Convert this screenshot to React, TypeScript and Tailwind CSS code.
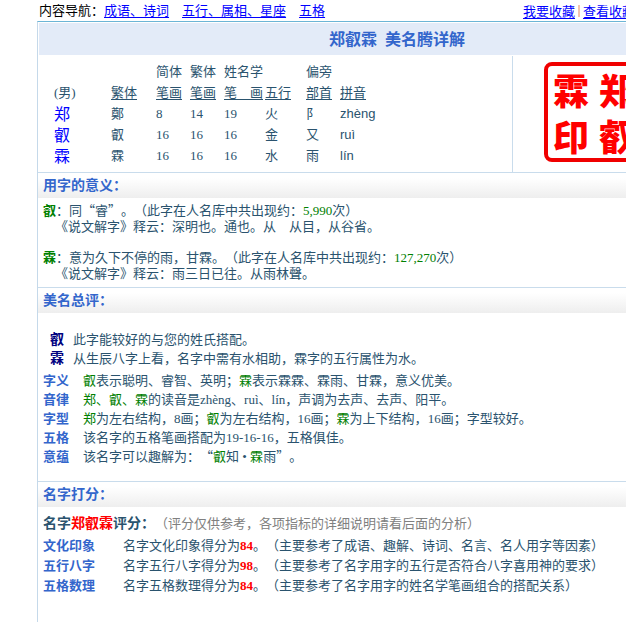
import type { ReactNode } from "react";

const characters = [
  { simple: "郑", traditional: "鄭", strokes: [8, 14, 19], element: "火", radical: "阝", pinyin: "zhèng" },
  { simple: "叡", traditional: "叡", strokes: [16, 16, 16], element: "金", radical: "又", pinyin: "ruì" },
  { simple: "霖", traditional: "霖", strokes: [16, 16, 16], element: "水", radical: "雨", pinyin: "lín" },
];

const scores = [
  { label: "文化印象", score: 84, note: "主要参考了成语、趣解、诗词、名言、名人用字等因素" },
  { label: "五行八字", score: 98, note: "主要参考了名字用字的五行是否符合八字喜用神的要求" },
  { label: "五格数理", score: 84, note: "主要参考了名字用字的姓名学笔画组合的搭配关系" },
];

function Latin({ children }: { children: ReactNode }) {
  return <span className="font-['Liberation_Serif',serif] leading-none">{children}</span>;
}

function Green({ children }: { children: ReactNode }) {
  return <span className="text-[#008000]">{children}</span>;
}

function NavLink({ children }: { children: ReactNode }) {
  return (
    <a href="#" className="text-[#0000ff] underline underline-offset-2">
      {children}
    </a>
  );
}

function SectionTitle({ children }: { children: ReactNode }) {
  return (
    <h2 className="h-[26px] border-t border-[#c9dcec] bg-linear-to-b from-white from-20% to-[#eeeeee] pl-[5px] text-[14px] leading-[23px] font-bold text-[#3366cc]">
      {children}
    </h2>
  );
}

function Comment({ label, children }: { label: string; children: ReactNode }) {
  return (
    <div className="flex">
      <dt className="w-10 font-bold text-[#3366cc]">{label}</dt>
      <dd>{children}</dd>
    </div>
  );
}

function Heading({ children }: { children: ReactNode }) {
  return (
    <th scope="col" className="p-0 text-left font-normal underline underline-offset-2">
      {children}
    </th>
  );
}

function StrokeTable() {
  return (
    <table className="w-full table-fixed border-collapse text-left leading-4">
      <colgroup>
        <col className="w-[57px]" />
        <col className="w-[45px]" />
        <col className="w-[34px]" />
        <col className="w-[34px]" />
        <col className="w-[41px]" />
        <col className="w-[41px]" />
        <col className="w-[34px]" />
        <col />
      </colgroup>
      <thead>
        <tr className="h-[21px]">
          <td className="p-0" />
          <td className="p-0" />
          <td className="p-0">简体</td>
          <td className="p-0">繁体</td>
          <td className="p-0">姓名学</td>
          <td className="p-0" />
          <td className="p-0">偏旁</td>
          <td className="p-0" />
        </tr>
        <tr className="h-[21px]">
          <td className="p-0">
            <Latin>(</Latin>男<Latin>)</Latin>
          </td>
          <Heading>繁体</Heading>
          <Heading>笔画</Heading>
          <Heading>笔画</Heading>
          <Heading>笔　画</Heading>
          <Heading>五行</Heading>
          <Heading>部首</Heading>
          <Heading>拼音</Heading>
        </tr>
      </thead>
      <tbody>
        {characters.map((c) => (
          <tr key={c.simple} className="h-[21px]">
            <td className="p-0 text-[16px] leading-4 text-[#0000ff]">{c.simple}</td>
            <td className="p-0">{c.traditional}</td>
            {c.strokes.map((n, i) => (
              <td key={i} className="p-0">
                <Latin>{n}</Latin>
              </td>
            ))}
            <td className="p-0">{c.element}</td>
            <td className="p-0">{c.radical}</td>
            <td className="p-0 pt-0.5 font-['Liberation_Sans',sans-serif]">{c.pinyin}</td>
          </tr>
        ))}
      </tbody>
    </table>
  );
}

function Seal() {
  return (
    <div className="grid size-[100px] grid-cols-2 grid-rows-2 place-items-center rounded-lg border-4 border-[#f00000] text-[36px] leading-[42px] font-black text-[#ff0000]">
      <span>霖</span>
      <span>郑</span>
      <span>印</span>
      <span>叡</span>
    </div>
  );
}

export default function App() {
  return (
    <div
      lang="zh-CN"
      className="min-h-screen overflow-hidden bg-white pl-[37px] font-['Noto_Sans_CJK_SC',sans-serif] text-[13px] text-[#2a536e] [text-spacing-trim:space-all]"
    >
      <div className="flex min-h-screen min-w-[718px] flex-col">
        <nav className="flex h-[21px] pl-0.5 leading-[19px] text-black">
          <div className="flex w-[484px] gap-[13px]">
            <span>
              内容导航：<NavLink>成语、诗词</NavLink>
            </span>
            <NavLink>五行、属相、星座</NavLink>
            <NavLink>五格</NavLink>
          </div>
          <div className="flex items-center">
            <NavLink>我要收藏</NavLink>
            <span className="mx-[3px] h-3 w-0.5 bg-[#f3c5ae]" />
            <NavLink>查看收藏</NavLink>
          </div>
        </nav>

        <main className="grow border-t border-l border-t-[#6cb5d6] border-l-[#c5d9ea]">
          <h1 className="mt-px ml-px flex h-8 justify-center gap-2 bg-[#e3ebf8] text-[16px] leading-[31px] font-bold text-[#3366cc]">
            <span>郑叡霖</span>
            <span>美名腾详解</span>
          </h1>

          <div className="flex pt-px">
            <div className="w-[475px] border-r border-[#c9dcec] pt-1 pb-[7px] pl-4">
              <StrokeTable />
            </div>
            <div className="pt-1.5 pl-[31px]">
              <Seal />
            </div>
          </div>

          <section>
            <SectionTitle>用字的意义：</SectionTitle>
            <div className="pt-1 pb-1.5 pl-[5px] leading-4">
              <p>
                <b className="text-[#008000]">叡</b>：同“睿”。（此字在人名库中共出现约：
                <Green>
                  <Latin>5,990</Latin>
                </Green>
                次）
              </p>
              <p className="pl-3">《说文解字》释云：深明也。通也。从　从目，从谷省。</p>
              <p className="pt-[15px]">
                <b className="text-[#008000]">霖</b>：意为久下不停的雨，甘霖。（此字在人名库中共出现约：
                <Green>
                  <Latin>127,270</Latin>
                </Green>
                次）
              </p>
              <p className="pl-3">《说文解字》释云：雨三日已往。从雨林聲。</p>
            </div>
          </section>

          <section>
            <SectionTitle>美名总评：</SectionTitle>
            <dl className="pt-4 pl-3 leading-[19px]">
              <div className="flex">
                <dt className="w-[23px] text-[14px] font-bold text-[#000080]">叡</dt>
                <dd>此字能较好的与您的姓氏搭配。</dd>
              </div>
              <div className="flex">
                <dt className="w-[23px] text-[14px] font-bold text-[#000080]">霖</dt>
                <dd>从生辰八字上看，名字中需有水相助，霖字的五行属性为水。</dd>
              </div>
            </dl>
            <dl className="pt-[3px] pb-4 pl-[5px] leading-[19px]">
              <Comment label="字义">
                <Green>叡</Green>表示聪明、睿智、英明；<Green>霖</Green>表示霖霖、霖雨、甘霖，意义优美。
              </Comment>
              <Comment label="音律">
                <Green>郑、叡、霖</Green>的读音是<Latin>zhèng</Latin>、<Latin>ruì</Latin>、<Latin>lín</Latin>
                ，声调为去声、去声、阳平。
              </Comment>
              <Comment label="字型">
                <Green>郑</Green>为左右结构，<Latin>8</Latin>画；<Green>叡</Green>为左右结构，<Latin>16</Latin>画；
                <Green>霖</Green>为上下结构，<Latin>16</Latin>画；字型较好。
              </Comment>
              <Comment label="五格">
                该名字的五格笔画搭配为<Latin>19-16-16</Latin>，五格俱佳。
              </Comment>
              <Comment label="意蕴">
                该名字可以趣解为：“<Green>叡</Green>知<Latin> • </Latin>
                <Green>霖</Green>雨”。
              </Comment>
            </dl>
          </section>

          <section>
            <SectionTitle>名字打分：</SectionTitle>
            <p className="pt-[5px] pl-[5px] leading-5">
              <b className="text-[14px]">
                名字<span className="text-[#ff0000]">郑叡霖</span>评分：
              </b>
              <span className="text-[#808080]">（评分仅供参考，各项指标的详细说明请看后面的分析）</span>
            </p>
            <dl className="pt-0.5 pl-[5px] leading-5">
              {scores.map((s) => (
                <div key={s.label} className="flex">
                  <dt className="w-20 font-bold text-[#3366cc]">{s.label}</dt>
                  <dd>
                    名字{s.label}得分为
                    <b className="text-[#ff0000]">
                      <Latin>{s.score}</Latin>
                    </b>
                    。（{s.note}）
                  </dd>
                </div>
              ))}
            </dl>
          </section>
        </main>
      </div>
    </div>
  );
}
